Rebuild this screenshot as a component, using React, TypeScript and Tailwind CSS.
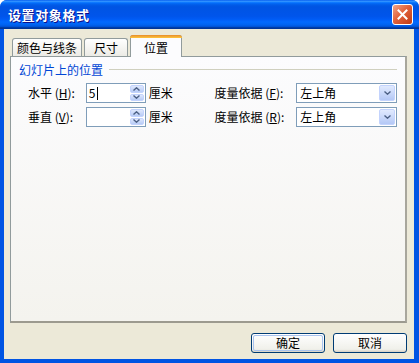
import React from "react";

const font = { fontFamily: '"Noto Sans CJK SC", "Liberation Sans", sans-serif' };

function Chevron({ up }: { up?: boolean }) {
  return (
    <svg width="7" height="4" viewBox="0 0 7 4" className="block">
      {up ? (
        <path d="M0.5 3.5 L3.5 0.8 L6.5 3.5" fill="none" stroke="#4d6185" strokeWidth="1.4" />
      ) : (
        <path d="M0.5 0.5 L3.5 3.2 L6.5 0.5" fill="none" stroke="#4d6185" strokeWidth="1.4" />
      )}
    </svg>
  );
}

function Spin({ value }: { value?: string }) {
  return (
    <div className="w-[60px] h-[20px] border border-[#7f9db9] bg-white flex">
      <div className="flex-1 flex items-center pl-[2px] text-[12px] leading-none text-black">
        {value ? (
          <>
            <span>{value}</span>
            <span className="w-px h-[13px] bg-black ml-[1px]" />
          </>
        ) : null}
      </div>
      <div className="w-[16px] flex flex-col gap-[1px] p-[1px]">
        <div className="flex-1 rounded-[2px] bg-[linear-gradient(to_bottom,#dfe8fd,#b7cbf6)] border border-[#c3d3fd] flex items-center justify-center">
          <Chevron up />
        </div>
        <div className="flex-1 rounded-[2px] bg-[linear-gradient(to_bottom,#dfe8fd,#b7cbf6)] border border-[#c3d3fd] flex items-center justify-center">
          <Chevron />
        </div>
      </div>
    </div>
  );
}

function Select() {
  return (
    <div className="w-[101px] h-[20px] border border-[#7f9db9] bg-white flex items-center">
      <div className="flex-1 pl-[3px] text-[12px] leading-none text-black">左上角</div>
      <div className="w-[16px] h-[16px] mr-[1px] rounded-[2px] bg-[linear-gradient(to_bottom,#e1eafe,#b4c8f6)] border border-[#c3d3fd] flex items-center justify-center">
        <Chevron />
      </div>
    </div>
  );
}

function Row({ a, ak, b, bk, value }: { a: string; ak: string; b: string; bk: string; value?: string }) {
  return (
    <div className="flex items-center h-[20px]">
      <div className="w-[58px] text-[12px] leading-none text-black whitespace-nowrap">
        {a} (<span className="underline">{ak}</span>):
      </div>
      <Spin value={value} />
      <div className="w-[69px] pl-[3px] text-[12px] leading-none text-black">厘米</div>
      <div className="w-[82px] text-[12px] leading-none text-black whitespace-nowrap">
        {b} (<span className="underline">{bk}</span>):
      </div>
      <Select />
    </div>
  );
}

function Btn({ label, def }: { label: string; def?: boolean }) {
  return (
    <div className="w-[74px] h-[20px] rounded-[3px] border border-[#003c74] bg-[linear-gradient(to_bottom,#ffffff,#f0f0ea_85%,#d6d0c5)] p-[1px]">
      <div
        className={
          "w-full h-full rounded-[2px] flex items-center justify-center text-[12px] leading-none text-black " +
          (def ? "border border-[#a9c3ee]" : "")
        }
      >
        {label}
      </div>
    </div>
  );
}

export default function App() {
  return (
    <div style={font} className="w-[419px] h-[363px] flex flex-col bg-[#0054e3] rounded-t-[7px] overflow-hidden">
      <div className="h-[29px] shrink-0 flex items-center pl-[8px] pr-[6px] bg-[linear-gradient(to_bottom,#0058ee_0%,#3593ff_4%,#288eff_6%,#127dff_8%,#036ffc_10%,#0262ee_14%,#0057e5_20%,#0054e3_24%,#0055eb_56%,#005bf5_66%,#026afe_76%,#0062ef_86%,#0052d6_92%,#0040ab_94%,#003092_100%)]">
        <div className="flex-1 text-white font-bold text-[13px] tracking-[0.6px] leading-none [text-shadow:1px_1px_#0f1089]">
          设置对象格式
        </div>
        <div className="w-[21px] h-[21px] rounded-[3px] border border-white bg-[linear-gradient(135deg,#f0a58a,#e2623c_45%,#c03a14)] flex items-center justify-center">
          <svg width="11" height="11" viewBox="0 0 11 11">
            <path d="M1.5 1.5 L9.5 9.5 M9.5 1.5 L1.5 9.5" stroke="white" strokeWidth="2" strokeLinecap="square" />
          </svg>
        </div>
      </div>
      <div className="flex-1 ml-[4px] mr-[5px] mb-[4px] bg-[#ece9d8] flex flex-col pt-[6px] pl-[6px] pr-[7px] pb-[6px]">
        <div className="flex items-end h-[21px] pl-[2px] gap-[2px]">
          <div className="w-[70px] h-[18px] border border-b-0 border-[#919b9c] rounded-t-[3px] bg-[linear-gradient(to_bottom,#ffffff,#ecebe5)] flex items-center justify-center text-[12px] leading-none text-black">
            颜色与线条
          </div>
          <div className="w-[44px] h-[18px] border border-b-0 border-[#919b9c] rounded-t-[3px] bg-[linear-gradient(to_bottom,#ffffff,#ecebe5)] flex items-center justify-center text-[12px] leading-none text-black">
            尺寸
          </div>
          <div className="relative z-10 w-[52px] h-[22px] -mb-px border border-b-0 border-[#919b9c] rounded-t-[3px] bg-[#fcfcfe] flex flex-col">
            <div className="h-[3px] -mx-px -mt-px rounded-t-[3px] bg-[linear-gradient(to_bottom,#e68b2c,#ffc73c)]" />
            <div className="flex-1 flex items-center justify-center text-[12px] leading-none text-black">位置</div>
          </div>
        </div>
        <div className="h-[267px] border border-[#919b9c] border-b-2 border-r-2 border-b-[#9c9a8f] border-r-[#a8a69c] bg-[linear-gradient(to_bottom,#fcfcfe,#f4f3ee)] pt-[6px] pl-[8px] pr-[8px]">
          <div className="flex items-center h-[13px]">
            <span className="text-[12px] leading-none text-[#0046d5]">幻灯片上的位置</span>
            <div className="flex-1 h-px bg-[#d0d0bf] ml-[6px]" />
          </div>
          <div className="mt-[7px] pl-[9px] flex flex-col gap-[4px]">
            <Row a="水平" ak="H" b="度量依据" bk="F" value="5" />
            <Row a="垂直" ak="V" b="度量依据" bk="R" />
          </div>
        </div>
        <div className="mt-[10px] flex justify-end gap-[8px]">
          <Btn label="确定" def />
          <Btn label="取消" />
        </div>
      </div>
    </div>
  );
}
